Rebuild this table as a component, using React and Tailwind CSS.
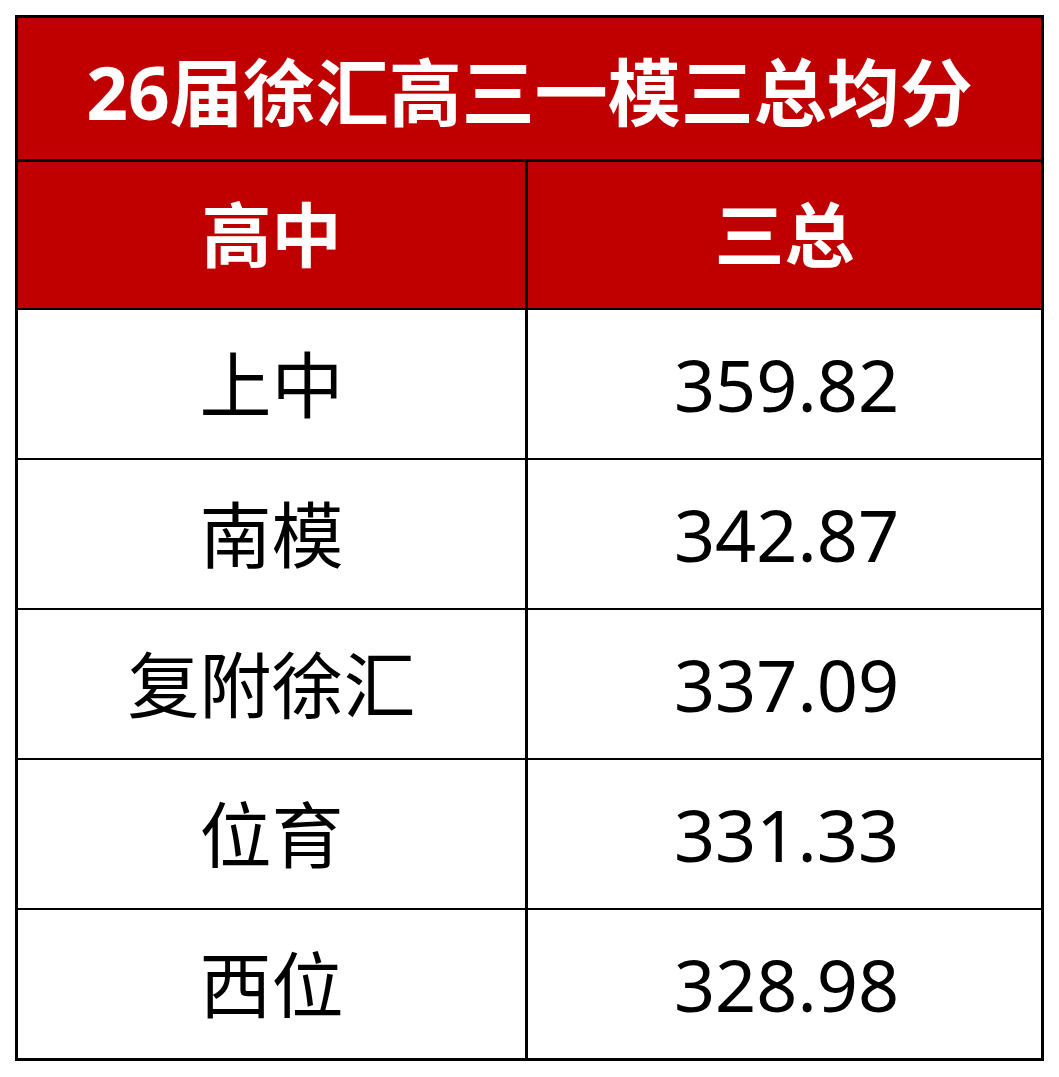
import React from "react";

const rows = [
  ["上中", "359.82"],
  ["南模", "342.87"],
  ["复附徐汇", "337.09"],
  ["位育", "331.33"],
  ["西位", "328.98"],
];

export default function App() {
  return (
    <div className="w-[1059px] h-[1077px] bg-white pt-[15px] pl-[15px]" style={{ fontFamily: '"Noto Sans", "Noto Sans CJK SC", sans-serif' }}>
      <div className="w-[1029px] border-[3px] border-black flex flex-col">
        {/* Title */}
        <div className="h-[141px] bg-[#c00000] flex items-center justify-center text-white font-bold text-[73px] leading-none pt-[6px]">
          26届徐汇高三一模三总均分
        </div>
        {/* Header */}
        <div className="h-[149px] border-t-[3px] border-black bg-[#c00000] grid grid-cols-[507px_1fr] text-white font-bold text-[70px] leading-none">
          <div className="flex items-center justify-center">高中</div>
          <div className="flex items-center justify-center border-l-[3px] border-black">三总</div>
        </div>
        {rows.map(([school, score], i) => (
          <div key={i} className="h-[150px] border-t-2 border-black grid grid-cols-[507px_1fr] text-black text-[72px] leading-none">
            <div className="flex items-center justify-center">{school}</div>
            <div className="flex items-center justify-center border-l-[3px] border-black pl-[4px]">{score}</div>
          </div>
        ))}
      </div>
    </div>
  );
}
